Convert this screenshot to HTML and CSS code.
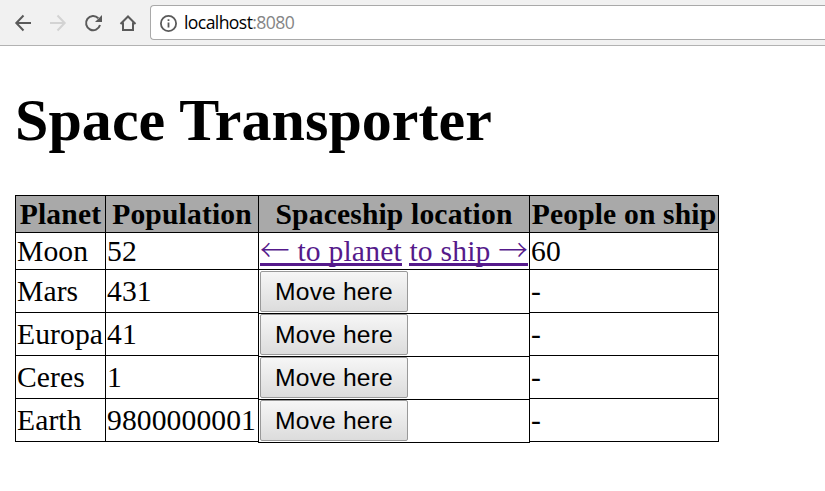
FILE: index.html
```
<!DOCTYPE html>
<html lang="en">
<head>
<meta charset="utf-8">
<title>Space Transporter</title>
<link rel="stylesheet" href="styles.css">
</head>
<body>
<header class="toolbar">
  <svg class="nav" viewBox="0 0 16 16"><path d="M16 8H1.500M8.500 .5L1.300 8l7.200 7.500"/></svg>
  <svg class="nav disabled" viewBox="0 0 16 16"><path d="M0 8h14.500M7.500 .5L14.700 8l-7.200 7.500"/></svg>
  <svg class="nav" viewBox="0 0 16 16"><path d="M13.300 3.200A7.100 7.100 0 1 0 15 10"/><path class="solid" d="M17 0v7h-7z"/></svg>
  <svg class="nav" viewBox="0 0 16 16"><path d="M.5 9L8 1.500 15.500 9M3 7.500V15h10V7.500"/></svg>
  <div class="address">
    <svg class="info" viewBox="0 0 17 17"><circle cx="8.500" cy="8.500" r="7.600"/><path d="M8.500 7.500v5M8.500 4.300v1.800"/></svg>
    <span class="url">localhost<span class="port">:8080</span></span>
  </div>
</header>
<main>
  <h1>Space Transporter</h1>
  <table>
    <thead>
      <tr><th>Planet</th><th>Population</th><th>Spaceship location</th><th>People on ship</th></tr>
    </thead>
    <tbody>
      <tr><td>Moon</td><td>52</td><td><a href="#"><span class="arrow">←</span> to planet</a> <a href="#">to ship <span class="arrow">→</span></a></td><td>60</td></tr>
      <tr class="remote"><td>Mars</td><td>431</td><td class="action"><button>Move here</button></td><td>-</td></tr>
      <tr class="remote"><td>Europa</td><td>41</td><td class="action"><button>Move here</button></td><td>-</td></tr>
      <tr class="remote"><td>Ceres</td><td>1</td><td class="action"><button>Move here</button></td><td>-</td></tr>
      <tr class="remote"><td>Earth</td><td>9800000001</td><td class="action"><button>Move here</button></td><td>-</td></tr>
    </tbody>
  </table>
</main>
</body>
</html>
```
FILE: styles.css
```
* { box-sizing: border-box; }
body {
  margin: 0;
  min-height: 100vh;
  background: #fff;
  color: #000;
  font: 29.6px/34px "Liberation Serif", "Times New Roman", serif;
  letter-spacing: 0.1px;
}
.toolbar {
  display: flex;
  align-items: center;
  height: 46px;
  padding-left: 15px;
  background: #f1f1f1;
  border-bottom: 1px solid #b2b2b2;
}
.nav {
  flex: none;
  width: 16px;
  height: 16px;
  margin-right: 19px;
  overflow: visible;
  fill: none;
  stroke: #5a5a5a;
  stroke-width: 2;
}
.nav.disabled { stroke: #d3d3d3; }
.nav .solid { fill: #5a5a5a; stroke: none; }
.address {
  display: flex;
  align-items: center;
  flex: 1;
  height: 35px;
  margin-left: -5px;
  padding-left: 9px;
  background: #fff;
  border: 1px solid #a9a9a9;
  border-right: 0;
  border-radius: 4px 0 0 4px;
}
.info {
  width: 17px;
  height: 17px;
  margin-top: 1px;
  fill: none;
  stroke: #5a5a5a;
  stroke-width: 1.8;
}
.url {
  margin: 0 0 1px 7px;
  font: 17.6px/24px "Open Sans", "Noto Sans", sans-serif;
  letter-spacing: -0.6px;
}
.port { color: #858585; }
main { padding: 0 15px 40px; }
h1 {
  margin: 40px 0 41px;
  font-size: 60px;
  line-height: 68px;
  letter-spacing: 0.05px;
}
table {
  display: grid;
  grid-template-columns: 91px 153px 271px 189px;
  grid-template-rows: 37px 37px repeat(4, 43px);
  width: max-content;
  padding: 0 0 1px;
  border: solid #000;
  border-width: 1px 0 0;
}
thead, tbody, tr { display: contents; }
th, td {
  padding: 1px 0 0 1px;
  border: solid #000;
  border-width: 0 1px 1px 0;
  white-space: nowrap;
}
th:first-child, td:first-child { border-left-width: 1px; }
th {
  padding-left: 0;
  background: #a9a9a9;
  letter-spacing: 0.15px;
}
.remote td { padding-top: 4px; }
.remote .action {
  margin: 0 0 -1px -1px;
  padding: 1px 0 0 1px;
  border-left-width: 1px;
}
/* One continuous rule under text and arrow, whatever font each uses */
a {
  color: #551a8b;
  letter-spacing: 0.2px;
  text-decoration: none;
  background: linear-gradient(#551a8b, #551a8b) no-repeat 0 28px / 100% 3px;
}
.arrow {
  font-family: "Noto Sans CJK JP", sans-serif;
  font-weight: 300;
  line-height: 0;
}
button {
  display: block;
  width: 148px;
  height: 41px;
  padding: 0;
  border: 1px solid #999;
  border-radius: 2px;
  background: linear-gradient(#f6f6f6, #dcdcdc);
  color: #000;
  font: 24.67px/36px "Liberation Sans", Arial, sans-serif;
  letter-spacing: 0.15px;
}
```
